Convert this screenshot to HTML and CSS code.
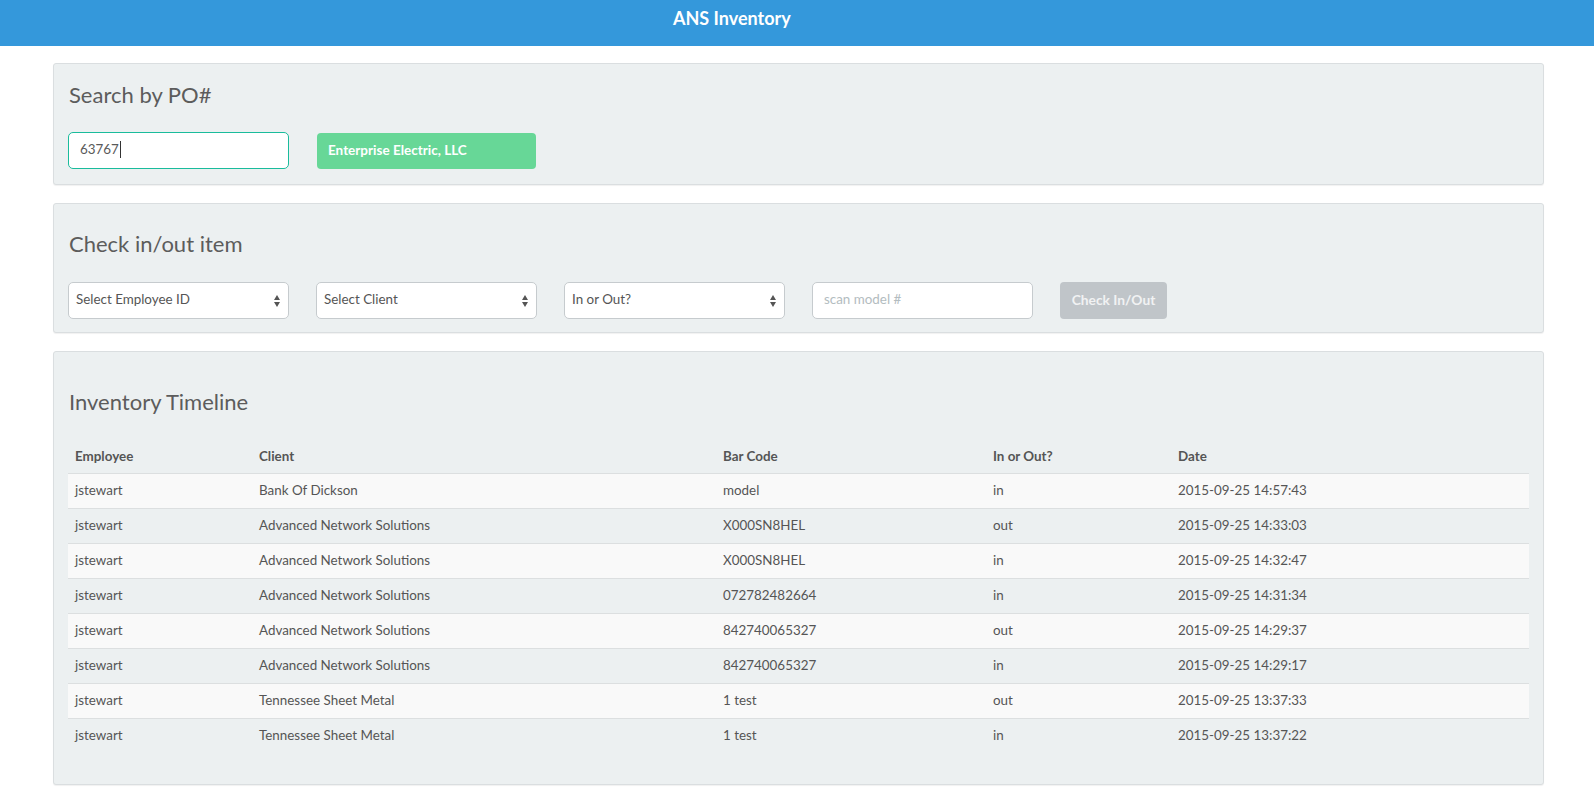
FILE: index.html
```html
<!DOCTYPE html>
<html>
<head>
<meta charset="utf-8">
<title>ANS Inventory</title>
<link rel="stylesheet" href="styles.css">
</head>
<body>
<header class="topbar"><span class="brand">ANS Inventory</span></header>
<main class="page">
  <section class="well well-search">
    <h4 class="well-title title-search">Search by PO#</h4>
    <div class="row">
      <div class="field field-focus">63767<span class="caret"></span></div>
      <div class="btn btn-success">Enterprise Electric, LLC</div>
    </div>
  </section>

  <section class="well well-check">
    <h4 class="well-title title-check">Check in/out item</h4>
    <div class="row">
      <div class="field select">Select Employee ID<span class="arrows"><span class="up"></span><span class="down"></span></span></div>
      <div class="field select">Select Client<span class="arrows"><span class="up"></span><span class="down"></span></span></div>
      <div class="field select">In or Out?<span class="arrows"><span class="up"></span><span class="down"></span></span></div>
      <div class="field placeholder">scan model #</div>
      <div class="btn btn-disabled">Check In/Out</div>
    </div>
  </section>

  <section class="well well-timeline">
    <h4 class="well-title title-timeline">Inventory Timeline</h4>
    <table class="timeline">
      <colgroup>
        <col class="c1"><col class="c2"><col class="c3"><col class="c4"><col class="c5">
      </colgroup>
      <thead>
        <tr><th>Employee</th><th>Client</th><th>Bar Code</th><th>In or Out?</th><th>Date</th></tr>
      </thead>
      <tbody>
        <tr><td>jstewart</td><td>Bank Of Dickson</td><td>model</td><td>in</td><td>2015-09-25 14:57:43</td></tr>
        <tr><td>jstewart</td><td>Advanced Network Solutions</td><td>X000SN8HEL</td><td>out</td><td>2015-09-25 14:33:03</td></tr>
        <tr><td>jstewart</td><td>Advanced Network Solutions</td><td>X000SN8HEL</td><td>in</td><td>2015-09-25 14:32:47</td></tr>
        <tr><td>jstewart</td><td>Advanced Network Solutions</td><td>072782482664</td><td>in</td><td>2015-09-25 14:31:34</td></tr>
        <tr><td>jstewart</td><td>Advanced Network Solutions</td><td>842740065327</td><td>out</td><td>2015-09-25 14:29:37</td></tr>
        <tr><td>jstewart</td><td>Advanced Network Solutions</td><td>842740065327</td><td>in</td><td>2015-09-25 14:29:17</td></tr>
        <tr><td>jstewart</td><td>Tennessee Sheet Metal</td><td>1 test</td><td>out</td><td>2015-09-25 13:37:33</td></tr>
        <tr><td>jstewart</td><td>Tennessee Sheet Metal</td><td>1 test</td><td>in</td><td>2015-09-25 13:37:22</td></tr>
      </tbody>
    </table>
  </section>
</main>
</body>
</html>
```

FILE: styles.css
```css
* { box-sizing: border-box; }

body {
  margin: 0;
  font-family: Lato, "Open Sans", "Liberation Sans", sans-serif;
  font-size: 13.4px;
  color: #555;
  background: #fff;
}

.topbar {
  height: 46px;
  background: #3498db;
  padding-left: 673px;
}

.brand {
  display: block;
  line-height: 36px;
  font-size: 18px;
  font-weight: 700;
  color: #fff;
}

.page {
  padding: 17px 50px 20px 53px;
  display: flex;
  flex-direction: column;
  gap: 18px;
}

.well {
  background: #ecf0f1;
  border: 1px solid #dadee0;
  border-radius: 3px;
  box-shadow: 0 1px 1px rgba(0, 0, 0, 0.06);
  padding: 0 14px;
}

.well-search { padding-top: 18px; padding-bottom: 15px; }
.well-check { padding-top: 27px; padding-bottom: 13px; }
.well-timeline { padding-top: 37px; padding-bottom: 31px; }

.well-title {
  margin: 0 0 0 1px;
  font-size: 22px;
  line-height: 26px;
  font-weight: 400;
  color: #5c5c5c;
}

.title-search { margin-bottom: 24px; }
.title-check { margin-bottom: 25px; }
.title-timeline { margin-bottom: 22px; }

.row {
  display: flex;
  align-items: center;
  gap: 27px;
}

.field {
  position: relative;
  width: 221px;
  height: 37px;
  background: #fff;
  border: 1px solid #c6cbce;
  border-radius: 5px;
  padding-left: 11px;
  line-height: 33px;
  font-size: 13.4px;
  color: #555;
}

.field-focus {
  border-color: #1abc9c;
  color: #5a5a5a;
}

.caret {
  display: inline-block;
  width: 1px;
  height: 17px;
  background: #333;
  vertical-align: middle;
  margin-left: 1px;
  margin-top: -3px;
}

.select {
  padding-left: 7px;
  color: #555;
}

.arrows {
  position: absolute;
  right: 8px;
  top: 12px;
  display: flex;
  flex-direction: column;
  gap: 2px;
}

.arrows .up {
  width: 0; height: 0;
  border-left: 3px solid transparent;
  border-right: 3px solid transparent;
  border-bottom: 5px solid #555;
}

.arrows .down {
  width: 0; height: 0;
  border-left: 3px solid transparent;
  border-right: 3px solid transparent;
  border-top: 5px solid #555;
}

.placeholder { color: #b3bcc0; }

.btn {
  height: 36px;
  line-height: 34px;
  border-radius: 4px;
  font-weight: 700;
  color: #fff;
}

.btn-success {
  width: 219px;
  margin-left: 1px;
  background: #67d797;
  padding-left: 11px;
  font-size: 13.5px;
}

.btn-disabled {
  width: 107px;
  height: 37px;
  line-height: 35px;
  background: #c0c5c9;
  color: #f1f2f3;
  font-size: 13.8px;
  text-align: center;
}

.timeline {
  width: 100%;
  border-collapse: collapse;
  table-layout: fixed;
}

.c1 { width: 184px; }
.c2 { width: 464px; }
.c3 { width: 270px; }
.c4 { width: 185px; }
.c5 { width: auto; }

.timeline th {
  text-align: left;
  font-weight: 700;
  height: 36px;
  padding: 2px 7px 0;
  color: #555;
}

.timeline td {
  height: 35px;
  padding: 0 7px 2px;
  border-top: 1px solid #dcdfe0;
  color: #555;
}

.timeline tbody tr:nth-child(odd) { background: #f9f9f9; }
```
